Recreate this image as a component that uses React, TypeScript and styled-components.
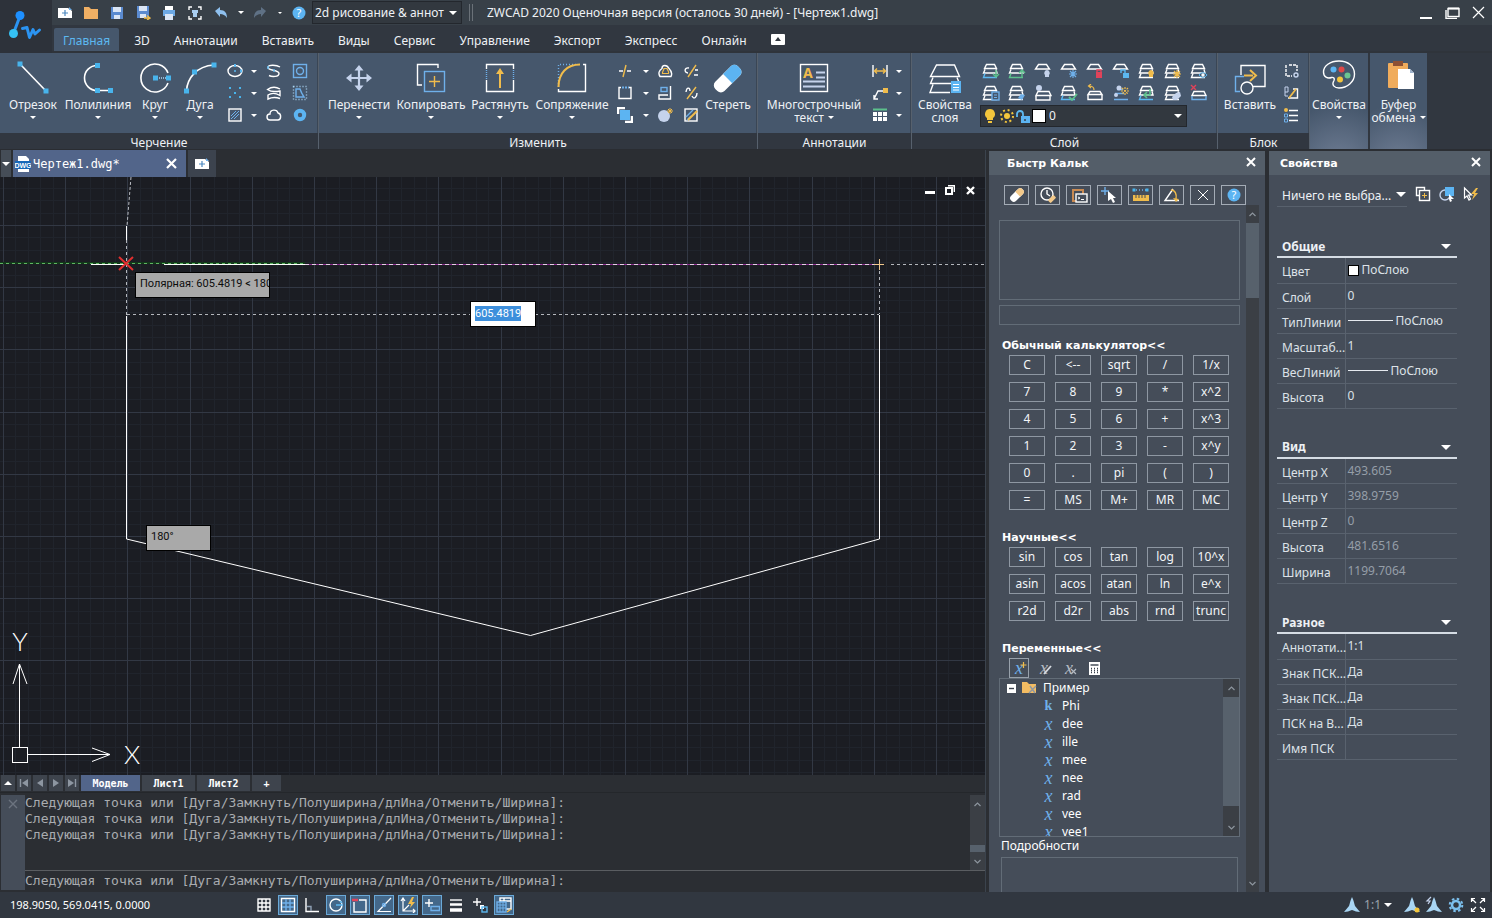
import React from "react";
import styled, { createGlobalStyle, css } from "styled-components";

const ui = `"Noto Sans", "Open Sans", sans-serif`;
const mono = `"DejaVu Sans Mono", "Liberation Mono", monospace`;
const wide = `"DejaVu Sans", "Noto Sans", sans-serif`;

const c = {
  title: "#384048",
  dark: "#313740",
  darker: "#2b2e33",
  ribbon: "#46576c",
  panel: "#454d59",
  head: "#545e69",
  line: "#59626e",
  blue: "#5cb8f0",
  sky: "#6fb0ea",
  pale: "#c5d3ec",
  gold: "#f0bc4c",
  green: "#5cc08c",
  red: "#e0435a",
  white: "#ffffff",
  text: "#eef1f5",
};

const GlobalStyle = createGlobalStyle`
  * { box-sizing: border-box; }
  body { margin: 0; background: ${c.dark}; }
  button, select, input, table { font: inherit; color: inherit; }
  button { margin: 0; padding: 0; border: 0; background: none; cursor: default; }
`;

const Shell = styled.div`
  height: 100vh;
  min-height: 640px;
  display: flex;
  flex-direction: column;
  overflow: hidden;
  background: ${c.darker};
  color: ${c.text};
  font: 12px/16px ${ui};
`;

const Caret = styled.span<{ $size?: number; $up?: boolean }>`
  display: block;
  flex: none;
  width: 0;
  height: 0;
  border: ${(p) => p.$size ?? 3}px solid transparent;
  border-bottom-width: ${(p) => (p.$up ? p.$size ?? 3 : 0)}px;
  border-top-width: ${(p) => (p.$up ? 0 : p.$size ?? 3)}px;
  ${(p) => (p.$up ? "border-bottom-color: #fff;" : "border-top-color: #fff;")}
`;

/* ---------- Title bar ---------- */

const Header = styled.header`
  flex: none;
  display: flex;
  background: ${c.dark};
`;
const Logo = styled.div`
  width: 52px;
  height: 53px;
  background: #2d323a;
`;
const HeaderRows = styled.div`
  flex: 1;
  min-width: 0;
`;
const TitleRow = styled.div`
  height: 25px;
  display: flex;
  align-items: center;
  background: ${c.title};
  white-space: nowrap;
`;
const QuickBar = styled.div`
  display: flex;
  align-items: center;
`;
const QuickButton = styled.button<{ $narrow?: boolean }>`
  width: ${(p) => (p.$narrow ? 13 : 26)}px;
  height: 24px;
  display: grid;
  place-items: center;
`;
const SelectFrame = styled.div<{ $w: number; $h: number }>`
  position: relative;
  flex: none;
  width: ${(p) => p.$w}px;
  height: ${(p) => p.$h}px;
  display: flex;
  align-items: center;
  justify-content: flex-end;
  padding-right: 5px;
`;
const Select = styled.select`
  position: absolute;
  inset: 0;
  appearance: none;
  padding: 0 14px 0 2px;
  border: 1px solid #23272d;
  background: #32383f;
  outline: 0;
`;
const Above = styled.div`
  position: relative;
  pointer-events: none;
`;
const Grip = styled.div`
  width: 4px;
  height: 17px;
  margin: 0 14px 0 7px;
  border: solid #6a7178;
  border-width: 0 1px;
`;
const Title = styled.div`
  flex: 1;
  overflow: hidden;
`;
const WindowButtons = styled.div`
  display: flex;
  padding-right: 1px;
`;
const WindowButton = styled.button`
  width: 26px;
  height: 25px;
  display: grid;
  place-items: center;
`;
const TabRow = styled.nav`
  height: 28px;
  padding: 3px 0 0 2px;
  display: flex;
  gap: 6px;
  border-bottom: 2px solid #2f343b;
`;
const RibbonTab = styled.button<{ $active?: boolean }>`
  padding: 1px 9px 0;
  height: 23px;
  line-height: 23px;
  border-radius: 2px 2px 0 0;
  ${(p) => p.$active && css`background: ${c.ribbon}; color: ${c.blue};`}
`;

/* ---------- Ribbon ---------- */

const Ribbon = styled.div`
  flex: none;
  display: flex;
  height: 97px;
  background: ${c.dark};
  border-bottom: 1px solid #2a2d32;
`;
const Group = styled.section<{ $w: number }>`
  width: ${(p) => p.$w}px;
  flex: none;
  display: flex;
  flex-direction: column;
  border-right: 1px solid #57616d;
`;
const GroupBody = styled.div`
  height: 80px;
  display: flex;
  background: ${c.ribbon};
  border-right: 1px solid #3a4655;
`;
const GroupTitle = styled.div`
  height: 16px;
  line-height: 19px;
  text-align: center;
  background: ${c.dark};
`;
const BigButton = styled.button<{ $w: number; $tall?: boolean }>`
  width: ${(p) => p.$w}px;
  flex: none;
  height: ${(p) => (p.$tall ? 96 : 80)}px;
  padding-top: 7px;
  display: flex;
  flex-direction: column;
  align-items: center;
  line-height: 13px;
  white-space: nowrap;
  svg { margin-bottom: 2px; }
  ${(p) =>
    p.$tall &&
    css`
      margin-right: 2px;
      background: radial-gradient(circle at 50% 115%, #6f7d94, ${c.ribbon} 52%);
    `}
`;
const BigLabel = styled.span`
  display: flex;
  align-items: center;
  gap: 4px;
  height: 13px;
`;
const BigCaret = styled.span`
  height: 13px;
  display: grid;
  place-items: center;
`;
const ToolGrid = styled.div<{ $cols: string }>`
  padding-top: 7px;
  display: grid;
  grid-template-columns: ${(p) => p.$cols};
  grid-auto-rows: 22px;
  align-content: start;
`;
const ToolButton = styled.button`
  display: grid;
  place-items: center;
`;
const LayerColumn = styled.div`
  padding-top: 7px;
`;
const LayerGrid = styled.div`
  display: grid;
  grid-template-columns: repeat(9, 26px);
  grid-auto-rows: 22px;
`;
const LayerSelectRow = styled.div`
  padding: 1px 0 0 2px;
`;
const LayerFace = styled(Above)`
  width: 200px;
  display: flex;
  align-items: center;
  gap: 2px;
`;
const LayerName = styled.span`
  flex: 1;
  padding-left: 1px;
`;

/* ---------- Workspace ---------- */

const Work = styled.main`
  flex: 1;
  min-height: 0;
  display: flex;
  padding-right: 2px;
`;
const DocColumn = styled.section`
  flex: 1;
  min-width: 0;
  display: flex;
  flex-direction: column;
  margin-right: 3px;
  border-right: 1px solid #3b434d;
`;
const DocTabs = styled.div`
  height: 27px;
  display: flex;
  padding-left: 1px;
  gap: 2px;
  background: ${c.darker};
`;
const DocList = styled.button`
  width: 10px;
  background: #454d57;
  display: grid;
  place-items: center;
`;
const DocTab = styled.button`
  width: 173px;
  display: flex;
  align-items: center;
  padding: 0 9px 0 2px;
  gap: 2px;
  background: #52658a;
  color: #fff;
  font: 12px/16px ${mono};
  span { flex: 1; text-align: left; }
`;
const NewTab = styled.button`
  width: 28px;
  background: #3c434e;
  display: grid;
  place-items: center;
`;
const Canvas = styled.div`
  position: relative;
  flex: 1;
  min-height: 0;
  overflow: hidden;
  background: #1b1d23;
`;
const Drawing = styled.svg`
  display: block;
  width: 100%;
  height: 100%;
`;
const MdiButtons = styled.div`
  position: absolute;
  top: 4px;
  right: 5px;
  display: flex;
`;
const MdiButton = styled.button`
  width: 20px;
  height: 18px;
  display: grid;
  place-items: center;
`;
const Tip = styled.div<{ $x: number; $y: number; $w: number }>`
  position: absolute;
  left: ${(p) => p.$x}px;
  top: ${(p) => p.$y}px;
  width: ${(p) => p.$w}px;
  height: 26px;
  padding-left: 4px;
  overflow: hidden;
  white-space: nowrap;
  border: 1px solid #000;
  background: #a9a9a9;
  color: #0c0c0c;
  font: 11px/22px Roboto, sans-serif;
`;
const DynamicField = styled.label`
  position: absolute;
  left: 470px;
  top: 124px;
  width: 66px;
  height: 26px;
  padding: 4px;
  border: 1px solid #000;
  background: #fff;
  input {
    display: block;
    width: 46px;
    height: 15px;
    padding: 0;
    border: 0;
    outline: 0;
    background: #3d8fdc;
    color: #fff;
    font: 11px/15px Roboto, sans-serif;
  }
`;
const SheetTabs = styled.div`
  height: 17px;
  display: flex;
  gap: 2px;
  padding: 0 0 1px 1px;
  background: ${c.darker};
`;
const SheetNav = styled.button`
  width: 14px;
  background: #3e444d;
  display: grid;
  place-items: center;
`;
const SheetTab = styled.button<{ $w: number; $active?: boolean }>`
  width: ${(p) => p.$w}px;
  background: ${(p) => (p.$active ? "#52658a" : "#3e444d")};
  color: #fff;
  font: bold 10px/15px ${mono};
`;
const Command = styled.div`
  height: 100px;
  display: flex;
  background: ${c.darker};
  padding: 2px 0 2px 1px;
  border-top: 1px solid #24272b;
  color: #a9acb0;
  font: 13px/16px ${mono};
`;
const CommandStrip = styled.button`
  width: 24px;
  background: #454d59;
  display: flex;
  justify-content: center;
  padding-top: 4px;
`;
const CommandText = styled.div`
  flex: 1;
  min-width: 0;
  display: flex;
  flex-direction: column;
`;
const Log = styled.div`
  flex: 1;
  display: flex;
  min-height: 0;
  border-bottom: 1px solid #5a5d61;
`;
const LogLines = styled.div`
  flex: 1;
  white-space: nowrap;
  overflow: hidden;
`;
const CommandInput = styled.input`
  height: 19px;
  padding: 0;
  border: 0;
  outline: 0;
  background: transparent;
`;

/* ---------- Scroll bars ---------- */

const ScrollTrack = styled.div<{ $w: number }>`
  width: ${(p) => p.$w}px;
  flex: none;
  display: flex;
  flex-direction: column;
  align-items: center;
  background: #3b3f45;
`;
const ScrollThumb = styled.div<{ $h?: number; $push?: boolean }>`
  width: 100%;
  height: ${(p) => p.$h}px;
  background: #57616c;
  ${(p) => p.$push && "margin-top: auto;"}
`;
const ScrollArrow = styled.button<{ $end?: boolean }>`
  height: 18px;
  width: 100%;
  flex: none;
  display: grid;
  place-items: center;
  ${(p) => p.$end && "margin-top: auto;"}
`;

/* ---------- Docked panels ---------- */

const Dock = styled.aside<{ $w: number }>`
  width: ${(p) => p.$w}px;
  flex: none;
  min-height: 0;
  display: flex;
  flex-direction: column;
  margin-top: 1px;
  background: ${c.panel};
  overflow: hidden;
  & + & { margin-left: 4px; }
`;
const DockHead = styled.div<{ $pad: number }>`
  height: 24px;
  flex: none;
  display: flex;
  align-items: center;
  justify-content: space-between;
  padding: 1px 9px 0 ${(p) => p.$pad}px;
  background: ${c.head};
  color: #fff;
  font: bold 11px/22px ${wide};
`;
const CalcBar = styled.div`
  flex: none;
  display: flex;
  gap: 6px;
  padding: 10px 0 0 15px;
`;
const CalcTool = styled.button`
  width: 25px;
  height: 20px;
  border: 1px solid #a3abb5;
  display: grid;
  place-items: center;
`;
const CalcMain = styled.div`
  flex: 1;
  min-height: 0;
  display: flex;
  justify-content: space-between;
  padding-right: 6px;
`;
const CalcScroll = styled.div`
  width: 251px;
  overflow: hidden;
  padding: 15px 0 0 10px;
`;
const History = styled.div`
  height: 80px;
  border: 1px solid #626c77;
`;
const CalcInput = styled.input`
  display: block;
  width: 100%;
  height: 20px;
  margin-top: 5px;
  border: 1px solid #626c77;
  background: transparent;
  outline: 0;
`;
const CalcHeading = styled.h2<{ $top: number }>`
  margin: ${(p) => p.$top}px 0 0 3px;
  height: 20px;
  color: #fff;
  font: bold 11px/21px ${wide};
`;
const Keys = styled.div`
  display: grid;
  grid-template-columns: repeat(5, 36px);
  grid-auto-rows: 20px;
  gap: 7px 10px;
  padding-left: 10px;
`;
const Key = styled.button`
  border: 1px solid #8e97a2;
  line-height: 18px;
  color: #f3f5f8;
  white-space: nowrap;
`;
const VarBar = styled.div`
  display: flex;
  gap: 5px;
  padding-left: 10px;
  height: 20px;
`;
const VarButton = styled.button<{ $on?: boolean }>`
  position: relative;
  width: 20px;
  height: 20px;
  border: 1px solid ${(p) => (p.$on ? "#98a1ab" : "transparent")};
  display: grid;
  place-items: center;
  svg + svg, i + svg {
    position: absolute;
    inset: 0;
  }
`;
const Tree = styled.div`
  height: 159px;
  display: flex;
  border: 1px solid #626c77;
`;
const TreeList = styled.ul`
  flex: 1;
  margin: 0;
  padding: 0;
  overflow: hidden;
  list-style: none;
  color: #fff;
`;
const TreeItem = styled.li<{ $root?: boolean }>`
  height: 18px;
  display: flex;
  align-items: center;
  gap: ${(p) => (p.$root ? 5 : 7)}px;
  padding-left: ${(p) => (p.$root ? 7 : 42)}px;
`;
const Glyph = styled.i<{ $plain?: boolean; $dim?: boolean }>`
  width: 13px;
  text-align: center;
  color: ${(p) => (p.$dim ? "#b4bac2" : c.sky)};
  font: ${(p) => (p.$plain ? "bold 14px" : "italic 18px")} / 16px "Liberation Serif", serif;
`;
const Details = styled.div`
  padding-left: 2px;
  line-height: 18px;
  color: #fff;
`;
const DetailBox = styled.div`
  height: 80px;
  margin: 2px 2px 0;
  border: 1px solid #626c77;
`;

const PropBar = styled.div`
  flex: none;
  height: 33px;
  padding: 8px 8px 0 8px;
  display: flex;
  gap: 4px;
`;
const PropFrame = styled(SelectFrame)`
  margin-right: 2px;
  padding-right: 1px;
  border-bottom: 1px solid #58616d;
`;
const PropSelect = styled(Select)`
  border: 0;
  padding: 2px 0 0 5px;
  background: transparent;
`;
const PropButton = styled.button`
  width: 20px;
  height: 21px;
  display: grid;
  place-items: center;
`;
const PropSection = styled.section`
  width: 180px;
  margin-left: 8px;
`;
const PropHeading = styled.button`
  width: 100%;
  height: 50px;
  padding: 29px 6px 0 5px;
  display: flex;
  justify-content: space-between;
  align-items: center;
  border-bottom: 2px solid #d5dce4;
  font-weight: bold;
  line-height: 18px;
`;
const PropTable = styled.table`
  width: 100%;
  table-layout: fixed;
  border-collapse: collapse;
  tr { height: 25px; border-bottom: 1px solid ${c.line}; }
  th, td { padding: 0; font-weight: normal; text-align: left; white-space: nowrap; }
  th { width: 68px; padding: 4px 0 0 5px; border-right: 1px solid ${c.line}; color: #dde2e8; }
`;
const PropValue = styled.span<{ $dim?: boolean }>`
  display: flex;
  align-items: center;
  gap: 3px;
  padding-left: 2px;
  color: ${(p) => (p.$dim ? "#959ea8" : "#dde2e8")};
`;
const Swatch = styled.span<{ $s: number }>`
  flex: none;
  width: ${(p) => p.$s}px;
  height: ${(p) => p.$s}px;
  border: 1px solid #000;
  background: #fff;
`;
const Stroke = styled.span<{ $w: number }>`
  width: ${(p) => p.$w}px;
  height: 1px;
  background: #e6eaef;
`;

/* ---------- Status bar ---------- */

const Status = styled.footer`
  flex: none;
  height: 26px;
  display: flex;
  align-items: center;
  background: ${c.dark};
  color: #fff;
`;
const Coords = styled.div`
  width: 244px;
  padding-left: 10px;
  font-size: 11px;
  line-height: 28px;
`;
const StatusTools = styled.div`
  flex: 1;
  display: flex;
  gap: 4px;
  padding-left: 10px;
`;
const StatusButton = styled.button<{ $on?: boolean }>`
  width: 20px;
  height: 20px;
  display: grid;
  place-items: center;
  border: 1px solid ${(p) => (p.$on ? "#6aa9d8" : "transparent")};
  background: ${(p) => (p.$on ? "#44688a" : "transparent")};
`;
const StatusRight = styled.div`
  display: flex;
  align-items: center;
  gap: 2px;
  padding-right: 4px;
  color: #9ba3ac;
`;
const ScaleButton = styled.button`
  display: flex;
  align-items: center;
  gap: 3px;
  margin-right: 8px;
`;

/* ---------- Icons ---------- */

type IconProps = { s?: number; w?: number; h?: number; children: React.ReactNode };
const Icon = ({ s = 16, w, h, children }: IconProps) => (
  <svg width={w ?? s} height={h ?? s} viewBox={`0 0 ${w ?? s} ${h ?? s}`} fill="none" stroke="#fff" strokeWidth="1.4" aria-hidden="true">
    {children}
  </svg>
);
const Dot = ({ x, y, r = 2.5 }: { x: number; y: number; r?: number }) => (
  <rect x={x - r} y={y - r} width={r * 2} height={r * 2} fill="#48b4ec" stroke="none" />
);
const HelpIcon = ({ s = 14 }: { s?: number }) => (
  <Icon s={s}>
    <circle cx={s / 2} cy={s / 2} r={s / 2 - 0.5} fill="#5cb4f2" stroke="none" />
    <text x={s / 2} y={s / 2 + 4} fontSize="11" textAnchor="middle" fill="#fff" stroke="none" fontFamily="Noto Sans, sans-serif">?</text>
  </Icon>
);
const CloseIcon = ({ color = "#fff", s = 10, w = 2 }: { color?: string; s?: number; w?: number }) => (
  <Icon s={s}><path d={`M1 1L${s - 1} ${s - 1}M${s - 1} 1L1 ${s - 1}`} stroke={color} strokeWidth={w} /></Icon>
);
const ChevronIcon = ({ down }: { down?: boolean }) => (
  <Icon s={9}><path d={down ? "M1.5 3l3 3 3-3" : "M1.5 6l3-3 3 3"} stroke="#8d959e" strokeWidth="1.2" /></Icon>
);
const NewDocIcon = () => (
  <Icon w={16} h={12}>
    <path d="M1 1h10l4 3v7H1z" fill="#fff" stroke="none" />
    <path d="M12 0l3 3h-3z" fill="#6fb0ea" stroke="none" />
    <path d="M8 3v6M5 6h6" stroke="#4a87bf" strokeWidth="1.2" />
  </Icon>
);

const big = {
  line: <Icon s={36}><path d="M5 4L31 31" strokeWidth="1.6" /><Dot x={5} y={4} /><Dot x={31} y={31} /></Icon>,
  poly: <Icon s={36}><path d="M17 5.500a12.500 12.500 0 0 0 0 25H30" strokeWidth="1.600" /><Dot x={17.5} y={5.5} /><Dot x={17.5} y={30.5} /><Dot x={30.5} y={30.5} /></Icon>,
  circle: <Icon s={36}><path d="M31 13a14 14 0 1 0 0 10" strokeWidth="1.6" /><path d="M18 18h13" strokeDasharray="1 1" stroke="#a9d4f2" /><Dot x={18.5} y={18} /><Dot x={31.5} y={18} /></Icon>,
  arc: <Icon s={36}><path d="M4.500 31C5 19 14 6 32 5" strokeWidth="1.6" /><Dot x={32} y={5} /><Dot x={12.5} y={12} /><Dot x={4.5} y={31} /></Icon>,
  move: <Icon s={36}><path d="M18 8v20M8 18h20" stroke={c.pale} strokeWidth="2.200" /><path d="M18 5l4.500 5.500h-9zM18 31l4.500-5.500h-9zM5 18l5.500-4.500v9zM31 18l-5.500-4.500v9z" fill={c.pale} stroke="none" /></Icon>,
  copy: <Icon s={36}><path d="M25 8V4.500H4.500V25H9" /><rect x="11.5" y="11.500" width="20" height="20" stroke={c.sky} /><path d="M21.500 16v11M16 21.500h11" stroke={c.gold} /></Icon>,
  stretch: <Icon s={36}><path d="M4.500 9V4.500h27V9M4.500 20v11.500h27V20" /><path d="M4.500 10v10M31.500 10v10" stroke={c.sky} strokeDasharray="1 1" /><path d="M18 28V12" stroke={c.gold} strokeWidth="2" /><path d="M18 8l4 6h-8z" fill={c.gold} stroke="none" /></Icon>,
  fillet: <Icon s={36}><path d="M4.500 29v2.500h27V4.500H29" /><path d="M4.500 27V4.500H24" stroke={c.sky} strokeDasharray="1 2" /><path d="M4.500 27C4.500 13 13 4.500 26 4.500" stroke={c.gold} strokeWidth="2" /></Icon>,
  erase: <Icon s={36}><g transform="rotate(-45 18 19)" stroke="none"><rect x="2" y="12" width="32" height="13" rx="5" fill="#fff" /><path d="M18 12h11a5 5 0 0 1 5 5v3a5 5 0 0 1-5 5H18z" fill="#5cb4f2" /></g></Icon>,
  mtext: <Icon s={36}><rect x="4.500" y="4.500" width="27" height="27" /><text x="7" y="18" fontSize="14" fontWeight="bold" fill={c.gold} stroke="none" fontFamily="Noto Sans, sans-serif">A</text><path d="M20 12.500h9M20 17.500h9M7 21.500h22M7 26.500h22" stroke={c.pale} strokeWidth="1.8" /></Icon>,
  layers: <Icon s={36}><path d="M9.500 5h18l5 11.500h-29z" /><path d="M6 17.500l-2.500 6h29L30 17.500M6 24.500L3 32.500h20" /><rect x="24" y="21" width="10" height="12" fill="#5cb4f2" stroke="none" /><path d="M26 24.500h6M26 27.500h6M26 30h6" strokeWidth="1" /></Icon>,
  insert: <Icon s={36}><path d="M9 15V5.500h24v21H21" /><path d="M12 16.500H3.500v15H8" stroke={c.sky} /><path d="M12 15.500h9" stroke={c.gold} strokeWidth="2" /><path d="M18 10l6 5.500-6 5.500" stroke={c.gold} strokeWidth="2" /><circle cx="15" cy="28" r="6" /></Icon>,
  palette: <Icon s={36}><path d="M18 1C9 1 2.500 6 2.500 12c0 5 4 7 8 5.500 2-.5 3.500 1 2.500 3-3 5 1 7.500 5 7.500 8 0 15.500-6 15.500-14S27 1 18 1z" /><g stroke="none"><circle cx="12.500" cy="9.500" r="3" fill="#5cb4f2" /><circle cx="20.500" cy="9.500" r="3" fill="#e04848" /><circle cx="26.500" cy="15.500" r="3" fill="#6cc490" /><circle cx="19" cy="19.500" r="3" fill="#f4c63c" /></g></Icon>,
  paste: <Icon s={36}><g stroke="none"><rect x="7" y="3" width="20" height="25" rx="1" fill="#f0ac5c" /><path d="M12 1h10v5H12z" fill="#8c5034" /><path d="M17 9h12l4 4v16H17z" fill="#fff" /><path d="M29 9l4 4h-4z" fill="#9db2cc" /></g></Icon>,
};

const Sm = ({ children }: { children: React.ReactNode }) => <Icon s={16}>{children}</Icon>;
const drawTools = [
  <Sm><ellipse cx="8" cy="8" rx="7" ry="5.500" /><circle cx="8" cy="8" r="1" fill={c.blue} stroke="none" /><path d="M8 1v3M14 6.500v3" stroke={c.blue} strokeWidth="2" /></Sm>,
  <Caret />,
  <Sm><path d="M14 4C11 2 2 1 2 4.500 2 8 13 6.500 13 10.500 13 14 6 14 3 12.500" /><path d="M2 3v3M8 6v3" stroke={c.blue} /></Sm>,
  <Sm><rect x="1.500" y="1.500" width="13" height="13" stroke={c.sky} /><circle cx="8" cy="8" r="3.500" stroke={c.sky} /></Sm>,
  <Sm>{[[3, 3], [13, 3], [8, 8], [3, 12], [13, 12]].map(([x, y]) => <Dot key={`${x}${y}`} x={x} y={y} r={1} />)}</Sm>,
  <Caret />,
  <Sm><path d="M14 4C9 1 5 2 1.500 4.500 5 7 9 7 14 6v4.500C9 7.500 5 8 2 10v4c4-2 8-2 12-.5" /></Sm>,
  <Sm><rect x="1.500" y="1.500" width="13" height="13" stroke="#a9d4f2" strokeDasharray="1 2" /><path d="M4 4h4c1 3 2 5 4 8H4z" stroke={c.sky} /></Sm>,
  <Sm><rect x="2" y="2" width="12" height="12" /><path d="M4 9l5-5M4 12l8-8M7 12l5-5" stroke={c.sky} strokeWidth="1" /></Sm>,
  <Caret />,
  <Sm><path d="M4 13a3 3 0 0 1 0-6c0-5 7-5 8-1 4 1 3 7 0 7z" /></Sm>,
  <Sm><circle cx="8" cy="8" r="4.200" stroke="#5cb4f2" strokeWidth="4" /></Sm>,
];
const editTools = [
  <Sm><path d="M2 8h4M10 8h4" /><path d="M9 2L6 14" stroke={c.gold} /></Sm>,
  <Caret />,
  <Sm><path d="M3 13.500h11c2-4-1-7-2-8-2-4-7-4-7 0-3 2-4 5-2 8z" /><path d="M5.500 10.500h6c1-2-1-3-1.500-5h-3c0 2-2 3-1.500 5z" stroke={c.gold} strokeWidth="1.200" /></Sm>,
  <Sm><path d="M6 5c-5-1-5 5-1 5M11 12h4M12 7h3" /><path d="M13 2L5 14" stroke={c.gold} /></Sm>,
  <Sm><path d="M4 2.500H2v11h12v-11h-2" /><path d="M5 2.500h7" stroke={c.sky} strokeDasharray="2 1" strokeWidth="2" /></Sm>,
  <Caret />,
  <Sm><path d="M13.500 1v13H2v-4h9" /><rect x="4" y="2.500" width="6" height="4" stroke={c.sky} /></Sm>,
  <Sm><path d="M3 7c1-6 4-4 4-1M9 11c2 4 5 1 5-3" /><path d="M13 2L4 14" stroke={c.gold} /></Sm>,
  <Sm><path d="M1 7V1h7M15 9v6H8" strokeWidth="2.500" /><rect x="3" y="3" width="10" height="10" fill="#5cb4f2" stroke="none" /></Sm>,
  <Caret />,
  <Sm><circle cx="7" cy="9" r="6" fill={c.pale} stroke="none" /><path d="M13 1v6M10 4h6M11 2l4 4M15 2l-4 4" stroke={c.gold} strokeWidth="1" /></Sm>,
  <Sm><rect x="2" y="2" width="12" height="12" /><path d="M3 10l7-7M4 13l4-4" stroke={c.sky} /><path d="M14 4L5 13" stroke={c.gold} strokeWidth="2" /></Sm>,
];
const noteTools = [
  <Sm><path d="M1 2v12M15 2v12" /><path d="M3 8h10M5 5.500L2.500 8 5 10.500M11 5.500L13.500 8 11 10.500" stroke={c.gold} /></Sm>,
  <Caret />,
  <Sm><path d="M2 14L6 6h5M2 10v4h4" /><rect x="11" y="3" width="5" height="5" fill={c.gold} stroke="none" /></Sm>,
  <Caret />,
  <Sm><path d="M1 2.500h14" stroke={c.green} strokeWidth="2" /><g fill="#fff" stroke="none">{[5, 10].map((y) => [1, 6, 11].map((x) => <rect key={`${x}-${y}`} x={x} y={y} width="4" height="4" />))}</g></Sm>,
  <Caret />,
];
const blockTools = [
  <Sm><path d="M3 2v11h6M6 2h8v6" strokeDasharray="3 1" /><circle cx="13" cy="12" r="2" stroke={c.pale} /></Sm>,
  <Sm><path d="M5 13h9.500V4H10" /><path d="M2 2h3v5H2zM2 7v4h3" stroke={c.pale} strokeWidth="1" /><path d="M13 4l-7 9" stroke={c.gold} strokeWidth="1.800" /></Sm>,
  <Sm><path d="M6 3.500h9M6 8.500h9M6 13.500h9" /><circle cx="3" cy="3" r="2" fill={c.gold} stroke="none" /><path d="M1.500 7h3v3h-3zM1.500 12h3v3h-3z" stroke={c.sky} strokeWidth="1" /></Sm>,
];

const star = (color: string, x = 13, y = 12) => (
  <path d={`M${x} ${y - 4}v8M${x - 4} ${y}h8M${x - 3} ${y - 3}l6 6M${x + 3} ${y - 3}l-6 6`} stroke={color} strokeWidth="1.200" />
);
const stack = (color = "#fff") => (
  <>
    <path d="M4.500 2.500h8l2 4H2.500zM3 7.500L1.500 11H15L14 7.500" />
    <path d="M3 11.500L1.500 15.500H15" stroke={color} />
  </>
);
const sheet = <path d="M4.500 2.500h8l3 4.500H1.500z" />;
const bulb = (color: string) => <path d="M13 8a3 3 0 0 1 2 5v2h-4v-2a3 3 0 0 1 2-5z" fill={color} stroke="none" />;
const layerIcons = [
  <>{stack(c.blue)}<path d="M14 8v7M11 12l3 3 3-3" stroke={c.green} /></>,
  <>{stack(c.green)}<path d="M14 16V8M11 11l3-3 3 3" stroke={c.green} /></>,
  <>{sheet}{bulb(c.pale)}</>,
  <>{sheet}{star(c.sky)}</>,
  <>{sheet}<rect x="10" y="10" width="6" height="6" fill={c.red} stroke="none" /><path d="M11 10V8h4v2" stroke={c.red} /></>,
  <>{sheet}<rect x="11" y="11" width="6" height="5" fill={c.blue} stroke="none" /><path d="M9 11V8h4v3" stroke={c.blue} /></>,
  <>{stack()}{bulb(c.gold)}</>,
  <>{stack()}{star(c.gold)}</>,
  <>{stack()}<path d="M9 13c2-3 6-3 8 0-2 3-6 3-8 0z" stroke={c.blue} fill={c.ribbon} strokeWidth="1" /><circle cx="13" cy="13" r="1" fill={c.blue} /></>,
  <>{stack()}<rect x="10" y="8" width="7" height="8" fill={c.ribbon} stroke={c.sky} /><path d="M12 11h3M12 13.500h3" stroke={c.sky} strokeWidth="1" /></>,
  <>{stack()}<path d="M10 14l3-4 4 1-3 5z" fill={c.sky} stroke="none" /></>,
  <><path d="M4 7.500h11l2 4H2zM2 12v4h14v-4" /><circle cx="5" cy="4" r="3" fill={c.pale} stroke="none" /></>,
  <>{stack(c.blue)}<path d="M9 13l3 3 5-6" stroke={c.green} strokeWidth="1.800" /></>,
  <><path d="M4 7.500h10l2 3H2zM2 11v4.500h14V11" /><path d="M8 6c0-3-2-4-5-4M5 0L2.500 2 5 4" stroke={c.gold} strokeWidth="1.200" /></>,
  <><path d="M5 5.500h6M3 9.500h9M2 15.500h14" stroke={c.sky} /><circle cx="7" cy="4" r="2.500" fill={c.pale} stroke="none" /><circle cx="4" cy="11" r="2" fill={c.pale} stroke="none" /><g strokeDasharray="2 1">{star(c.gold, 13, 7)}</g></>,
  <>{stack(c.blue)}<path d="M12 5v6H6M9 8l-3 3 3 3" stroke={c.green} strokeWidth="1.600" /></>,
  <>{stack()}<path d="M8 13l4-4 4-1 1 4-4 4h-4z" fill={c.pale} stroke="none" /></>,
  <><path d="M4 7.500h10l2 4H2z" /><path d="M2 12v3.500h14V12" stroke={c.sky} /><path d="M1 1l5 5M6 1L1 6" stroke={c.red} /></>,
];

const quickIcons: { name: string; narrow?: boolean; icon: React.ReactNode }[] = [
  { name: "Создать", icon: <NewDocIcon /> },
  { name: "Открыть", icon: <Icon s={16}><path d="M1 2h5l2 2h7v10H1z" fill="#f0b064" stroke="none" /></Icon> },
  { name: "Сохранить", icon: <Icon s={14}><path d="M1 1h12v12H1z" fill="#5b8bd0" stroke="none" /><path d="M3 1h8v5H3zM4 9h6v4H4z" fill="#dbe6f6" stroke="none" /></Icon> },
  { name: "Сохранить как", icon: <Icon s={15}><path d="M1 1h12v12H1z" fill="#5b8bd0" stroke="none" /><path d="M3 1h8v5H3zM4 9h6v4H4z" fill="#dbe6f6" stroke="none" /><path d="M8 13h5M11 10.500l3 2.500-3 2" stroke={c.gold} /></Icon> },
  { name: "Печать", icon: <Icon s={14}><path d="M3 0h8v4H3z" fill="#fff" stroke="none" /><path d="M1 4h12v6H1z" fill="#6ca8e4" stroke="none" /><path d="M3 8h8v6H3z" fill="#dbe6f6" stroke="none" /></Icon> },
  { name: "Просмотр", icon: <Icon s={14}><path d="M1 4V1h3M10 1h3v3M13 10v3h-3M4 13H1v-3" /><path d="M4 4h6v3H4zM5 7h4v4H5z" fill="#a8cdf0" stroke="none" /></Icon> },
  { name: "Отменить", icon: <Icon s={14}><path d="M1 5l5-4v3c5 0 7 3 7 8-2-3-4-4-7-4v3z" fill="#8fc0ee" stroke="none" /></Icon> },
  { name: "Список отмены", narrow: true, icon: <Caret $size={3} /> },
  { name: "Вернуть", icon: <Icon s={14}><path d="M13 5L8 1v3C3 4 1 7 1 12c2-3 4-4 7-4v3z" fill="#5f7185" stroke="none" /></Icon> },
  { name: "Список возврата", narrow: true, icon: <Caret $size={2} /> },
  { name: "Справка", icon: <HelpIcon /> },
];

const calcTools = [
  { name: "Очистить", icon: <Icon w={18} h={16}><g transform="rotate(-45 9 8)" stroke="none"><rect x="1" y="4.500" width="16" height="7" rx="3" fill="#fff" /><path d="M10 4.500h4a3 3 0 0 1 3 3v1a3 3 0 0 1-3 3h-4z" fill="#f3c98a" /></g></Icon> },
  { name: "Очистить журнал", icon: <Icon w={18} h={16}><circle cx="8" cy="7" r="6" /><path d="M8 3v4l3 2" /><g transform="rotate(-45 13 12)"><rect x="9" y="10" width="8" height="4" rx="1" fill="#f3c98a" stroke="none" /></g></Icon> },
  { name: "Вставить в командную строку", icon: <Icon w={18} h={16}><path d="M2 2h12v13H2z" fill="#c98a52" stroke="none" /><path d="M4 4h8v9H4z" fill="#454d59" stroke="none" /><rect x="6" y="7" width="11" height="8" fill="#454d59" /><path d="M8 10l2 1-2 1M11 12.500h3" strokeWidth="1" /></Icon> },
  { name: "Координаты", icon: <Icon w={18} h={16}><path d="M4 0v8M0 4h8" stroke={c.sky} /><path d="M7 4l8 7h-3l2 4-2 1-2-4-3 2z" fill="#fff" stroke="none" /></Icon> },
  { name: "Расстояние", icon: <Icon w={18} h={16}><Dot x={2} y={3} r={1.5} /><Dot x={15} y={3} r={1.5} /><path d="M4 3h10" stroke={c.sky} strokeDasharray="1 2" /><path d="M1 8h16v6H1z" fill={c.gold} stroke="none" /><path d="M4 8v3M7 8v3M10 8v3M13 8v3" stroke="#454d59" strokeWidth="1" /></Icon> },
  { name: "Угол", icon: <Icon w={18} h={16}><path d="M10 2L2 13.500h14" /><path d="M8 3c4 0 6 4 5 9" stroke={c.gold} /><path d="M10 11l3 4 3-3z" fill={c.gold} stroke="none" /></Icon> },
  { name: "Пересечение", icon: <Icon w={18} h={16}><path d="M4 3l10 10M14 3L4 13" strokeWidth="1" /></Icon> },
  { name: "Справка", icon: <HelpIcon s={14} /> },
];

const statusTools: { name: string; on?: boolean; icon: React.ReactNode }[] = [
  { name: "Сетка", icon: <Icon s={16}><path d="M1.500 2h13M1.500 6h13M1.500 10h13M1.500 14h13M2 1.500v13M6 1.500v13M10 1.500v13M14 1.500v13" /></Icon> },
  { name: "Шаг", on: true, icon: <Icon s={16}><path d="M1.500 1.500h13v13h-13z" /><path d="M2 6h12M2 10h12M6 2v12M10 2v12" stroke={c.sky} /></Icon> },
  { name: "Орто", icon: <Icon s={16}><path d="M2 1v13.500h13" /><path d="M3 9.500h4V14" stroke="#8fa0b4" /></Icon> },
  { name: "Полярная", on: true, icon: <Icon s={16}><circle cx="8" cy="8" r="6" /><path d="M8 8h7M12 4l2 2" stroke={c.blue} /></Icon> },
  { name: "Привязка", on: true, icon: <Icon s={16}><path d="M2 5v10h12V3H7" /><path d="M0 3h6" stroke={c.red} strokeWidth="2.500" /></Icon> },
  { name: "Отслеживание", on: true, icon: <Icon s={16}><path d="M15 1L2 14.500h13" strokeWidth="1.200" /><circle cx="8" cy="8" r="1.500" stroke={c.sky} /></Icon> },
  { name: "Динамическая ПСК", on: true, icon: <Icon s={16}><path d="M3 2v12h12M3 14l6-6M1 4l2-3 2 3M13 12l2 2-2 2" strokeWidth="1.200" /><path d="M12 0L8 7h3l-1 4 5-6h-3l2-5z" fill={c.gold} stroke="none" /></Icon> },
  { name: "Динамический ввод", on: true, icon: <Icon s={16}><path d="M5 2v8M1 6h8" /><path d="M7 9.500h8.500v4H7z" stroke={c.sky} /></Icon> },
  { name: "Вес линий", icon: <Icon s={16}><path d="M2 3h12" /><path d="M2 7.500h12" strokeWidth="2.500" /><path d="M2 13h12" strokeWidth="3.500" /></Icon> },
  { name: "Циклический выбор", icon: <Icon s={16}><path d="M5 1v8M1 5h8" /><path d="M8 8h4v4H8z" fill="#fff" stroke="none" /><rect x="10" y="10" width="5" height="5" stroke={c.blue} /></Icon> },
  { name: "Быстрые свойства", on: true, icon: <Icon s={18}><rect x="5" y="2" width="11" height="11" /><path d="M5 5h11M9 2v11" /><rect x="2" y="6" width="9" height="10" fill="#44688a" stroke={c.sky} /><path d="M2 9h9M2 12h9M5 6v10M8 6v10" stroke={c.sky} strokeWidth="1" /><path d="M12 16l4-3" stroke={c.gold} /></Icon> },
];

const ScaleIcon = ({ extra }: { extra?: React.ReactNode }) => (
  <Icon s={18}>
    <path d="M9 1c2 4 2 6 3 9l5 6c-3 0-5-1-8-2-3 1-5 2-8 2l5-6c1-3 1-5 3-9z" fill="#a9d6f4" stroke="none" />
    {extra}
  </Icon>
);

/* ---------- Data ---------- */

const ribbonTabs = ["Главная", "3D", "Аннотации", "Вставить", "Виды", "Сервис", "Управление", "Экспорт", "Экспресс", "Онлайн"];
const basicKeys = "C <-- sqrt / 1/x 7 8 9 * x^2 4 5 6 + x^3 1 2 3 - x^y 0 . pi ( ) = MS M+ MR MC".split(" ");
const scienceKeys = "sin cos tan log 10^x asin acos atan ln e^x r2d d2r abs rnd trunc".split(" ");
const variables = ["Phi", "dee", "ille", "mee", "nee", "rad", "vee", "vee1"];
const prompt = "Следующая точка или [Дуга/Замкнуть/Полуширина/длИна/Отменить/Ширина]:";

type Row = { label: string; value: string; kind?: "swatch" | "type" | "weight" | "dim" };
const sections: { title: string; rows: Row[] }[] = [
  {
    title: "Общие",
    rows: [
      { label: "Цвет", value: "ПоСлою", kind: "swatch" },
      { label: "Слой", value: "0" },
      { label: "ТипЛинии", value: "ПоСлою", kind: "type" },
      { label: "Масштаб...", value: "1" },
      { label: "ВесЛиний", value: "ПоСлою", kind: "weight" },
      { label: "Высота", value: "0" },
    ],
  },
  {
    title: "Вид",
    rows: [
      { label: "Центр X", value: "493.605", kind: "dim" },
      { label: "Центр Y", value: "398.9759", kind: "dim" },
      { label: "Центр Z", value: "0", kind: "dim" },
      { label: "Высота", value: "481.6516", kind: "dim" },
      { label: "Ширина", value: "1199.7064", kind: "dim" },
    ],
  },
  {
    title: "Разное",
    rows: [
      { label: "Аннотати...", value: "1:1" },
      { label: "Знак ПСК...", value: "Да" },
      { label: "Знак ПСК...", value: "Да" },
      { label: "ПСК на В...", value: "Да" },
      { label: "Имя ПСК", value: "" },
    ],
  },
];

/* ---------- Parts ---------- */

type BigProps = { icon: React.ReactNode; w: number; lines: string[]; caret?: "below" | "inline"; tall?: boolean };
const Big = ({ icon, w, lines, caret, tall }: BigProps) => (
  <BigButton $w={w} $tall={tall}>
    {icon}
    {lines.map((line, i) => (
      <BigLabel key={line}>
        {line}
        {caret === "inline" && i === lines.length - 1 && <Caret />}
      </BigLabel>
    ))}
    {caret === "below" && <BigCaret><Caret /></BigCaret>}
  </BigButton>
);

const Tools = ({ cols, items }: { cols: string; items: React.ReactNode[] }) => (
  <ToolGrid $cols={cols}>
    {items.map((it, i) => <ToolButton key={i}>{it}</ToolButton>)}
  </ToolGrid>
);

const GRID = 62.2;
const gridPath = (step: number, skip: number) => {
  let d = "";
  for (let i = -4; i * step < 2600; i++) {
    if (skip && i % skip === 0) continue;
    d += `M${Math.round(3 + i * step) + 0.5} 0V1600M0 ${Math.round(48 + i * step) + 0.5}H2600`;
  }
  return d;
};

const CanvasDrawing = () => (
  <Drawing fill="none" stroke="#fff" aria-label="Чертеж">
    <path d={gridPath(GRID / 5, 5)} stroke="#20242c" />
    <path d={gridPath(GRID, 0)} stroke="#323844" />
    <path d="M131 0L127 49" stroke="#b9bcc2" strokeDasharray="3 2" />
    <path d="M126.500 49v14" />
    <path d="M126.500 63v75M879.500 88v49M127 137.500h752M891 87.500h2000" stroke="#b4b7bc" strokeDasharray="3 3" />
    <path d="M0 85.500h305M0 86.500h305" stroke="#12381a" />
    <path d="M0 86.500h305" stroke="#5fb562" strokeDasharray="3 3" />
    <path d="M91 87.500h35M164 87.500h141" />
    <path d="M305 87.500h575" stroke="#8d2c90" />
    <path d="M305 87.500h575" stroke="#e6cfe6" strokeDasharray="4 3" />
    <path d="M126.500 139v223L530.500 458.500 879.500 362V138" />
    <path d="M119 80l14 13M133 80l-14 13" stroke="#e03030" strokeWidth="2" />
    <path d="M874 87.500h10M879.500 82v11" stroke="#f0c88c" />
    <rect x="12.500" y="570.500" width="15" height="15" />
    <path d="M19.500 570V487M13 507l6.500-20 7.500 20M28 577.500h82M92 571l18 6.500-18 7" />
    <g stroke="none" fill="#fff" fontFamily="Lato, sans-serif" fontWeight="300" fontSize="26" textAnchor="middle">
      <text x="20" y="474">Y</text>
      <text x="132" y="587">X</text>
    </g>
  </Drawing>
);

const PropCell = ({ row }: { row: Row }) => (
  <PropValue $dim={row.kind === "dim"}>
    {row.kind === "swatch" && <Swatch $s={11} />}
    {row.kind === "type" && <Stroke $w={45} />}
    {row.kind === "weight" && <Stroke $w={40} />}
    {row.value}
  </PropValue>
);

export default function App() {
  return (
    <Shell>
      <GlobalStyle />
      <Header>
        <Logo>
          <Icon w={52} h={53}>
            <g stroke="#2b94f2" strokeWidth="3" strokeLinecap="round" strokeLinejoin="round">
              <path d="M20 16L14 32M22.500 28.500l4.500-1 2.500 10 3.500-8 2 4.500 4.500-4" />
            </g>
            <circle cx="20" cy="15.500" r="4.500" fill="#1e90ff" stroke="none" />
            <circle cx="13.500" cy="33.500" r="4.500" fill="#35c2f4" stroke="none" />
          </Icon>
        </Logo>
        <HeaderRows>
          <TitleRow>
            <QuickBar>
              {quickIcons.map((q) => (
                <QuickButton key={q.name} $narrow={q.narrow} aria-label={q.name}>{q.icon}</QuickButton>
              ))}
            </QuickBar>
            <SelectFrame $w={150} $h={23}>
              <Select aria-label="Рабочее пространство"><option>2d рисование &amp; аннот</option></Select>
              <Above><Caret $size={4} /></Above>
            </SelectFrame>
            <Grip />
            <Title>ZWCAD 2020 Оценочная версия (осталось 30 дней) - [Чертеж1.dwg]</Title>
            <WindowButtons>
              <WindowButton aria-label="Свернуть"><Icon s={14}><path d="M1 12h12" strokeWidth="2" /></Icon></WindowButton>
              <WindowButton aria-label="Развернуть"><Icon w={15} h={12}><rect x="3" y="1.500" width="11" height="8" /><path d="M3 1.500h11" strokeWidth="2" /><path d="M1 3v8.500h11" /></Icon></WindowButton>
              <WindowButton aria-label="Закрыть"><CloseIcon s={13} w={1.2} /></WindowButton>
            </WindowButtons>
          </TitleRow>
          <TabRow>
            {ribbonTabs.map((t, i) => <RibbonTab key={t} $active={i === 0}>{t}</RibbonTab>)}
            <RibbonTab aria-label="Свернуть ленту">
              <Icon w={14} h={11}><rect width="14" height="11" rx="1" fill="#fff" stroke="none" /><path d="M7 3l3 4H4z" fill="#31373f" stroke="none" /></Icon>
            </RibbonTab>
          </TabRow>
        </HeaderRows>
      </Header>

      <Ribbon>
        <Group $w={319}>
          <GroupBody>
            <Big icon={big.line} w={66} lines={["Отрезок"]} caret="below" />
            <Big icon={big.poly} w={64} lines={["Полилиния"]} caret="below" />
            <Big icon={big.circle} w={50} lines={["Круг"]} caret="below" />
            <Big icon={big.arc} w={40} lines={["Дуга"]} caret="below" />
            <Tools cols="30px 8px 32px 20px" items={drawTools} />
          </GroupBody>
          <GroupTitle>Черчение</GroupTitle>
        </Group>
        <Group $w={439}>
          <GroupBody>
            <Big icon={big.move} w={80} lines={["Перенести"]} caret="below" />
            <Big icon={big.copy} w={64} lines={["Копировать"]} caret="below" />
            <Big icon={big.stretch} w={74} lines={["Растянуть"]} caret="below" />
            <Big icon={big.fillet} w={70} lines={["Сопряжение"]} caret="below" />
            <Tools cols="36px 4px 36px 16px" items={editTools} />
            <Big icon={big.erase} w={58} lines={["Стереть"]} />
          </GroupBody>
          <GroupTitle>Изменить</GroupTitle>
        </Group>
        <Group $w={154}>
          <GroupBody>
            <Big icon={big.mtext} w={112} lines={["Многострочный", "текст"]} caret="inline" />
            <Tools cols="20px 18px" items={noteTools} />
          </GroupBody>
          <GroupTitle>Аннотации</GroupTitle>
        </Group>
        <Group $w={306}>
          <GroupBody>
            <Big icon={big.layers} w={66} lines={["Свойства", "слоя"]} />
            <LayerColumn>
              <LayerGrid>
                {layerIcons.map((icon, i) => (
                  <ToolButton key={i} aria-label={`Слой, команда ${i + 1}`}><Icon s={18}>{icon}</Icon></ToolButton>
                ))}
              </LayerGrid>
              <LayerSelectRow>
                <SelectFrame $w={207} $h={22}>
                  <Select aria-label="Текущий слой" />
                  <LayerFace>
                    <Icon w={16} h={16}><path d="M8 1a5 5 0 0 1 3 9v2H5v-2a5 5 0 0 1 3-9zM6 13h4v2H6z" fill="#f4c63c" stroke="none" /></Icon>
                    <Icon s={14}><circle cx="7" cy="7" r="3" fill="#f4c63c" stroke="none" /><circle cx="7" cy="7" r="6" stroke="#f4c63c" strokeWidth="2" strokeDasharray="2 2.700" /></Icon>
                    <Icon s={14}><path d="M1 8V5a3 3 0 0 1 6 0v2" stroke={c.blue} strokeWidth="1.800" /><rect x="5" y="7" width="9" height="7" fill="#5cb4f2" stroke="none" /><path d="M9 10v2" stroke="#31373f" /></Icon>
                    <Swatch $s={14} />
                    <LayerName>0</LayerName>
                    <Caret $size={4} />
                  </LayerFace>
                </SelectFrame>
              </LayerSelectRow>
            </LayerColumn>
          </GroupBody>
          <GroupTitle>Слой</GroupTitle>
        </Group>
        <Group $w={92}>
          <GroupBody>
            <Big icon={big.insert} w={64} lines={["Вставить"]} />
            <Tools cols="18px" items={blockTools} />
          </GroupBody>
          <GroupTitle>Блок</GroupTitle>
        </Group>
        <Big icon={big.palette} w={58} lines={["Свойства"]} caret="below" tall />
        <Big icon={big.paste} w={57} lines={["Буфер", "обмена"]} caret="inline" tall />
      </Ribbon>

      <Work>
        <DocColumn>
          <DocTabs>
            <DocList aria-label="Список чертежей"><Caret $size={4} /></DocList>
            <DocTab>
              <Icon w={16} h={16}><path d="M3 0h8l3 3v13H3z" fill="#fff" stroke="none" /><rect x="0" y="5" width="16" height="8" fill="#1668b8" stroke="none" /><text x="8" y="12" fontSize="7" fontWeight="bold" textAnchor="middle" fill="#fff" stroke="none" fontFamily="Liberation Sans, sans-serif">DWG</text></Icon>
              <span>Чертеж1.dwg*</span>
              <CloseIcon s={11} w={2.2} />
            </DocTab>
            <NewTab aria-label="Новый чертеж"><NewDocIcon /></NewTab>
          </DocTabs>
          <Canvas>
            <CanvasDrawing />
            <MdiButtons>
              <MdiButton aria-label="Свернуть"><Icon s={10}><path d="M0 7.500h10" strokeWidth="3" /></Icon></MdiButton>
              <MdiButton aria-label="Восстановить"><Icon s={10}><rect x="1" y="3" width="6" height="6" strokeWidth="2" /><path d="M3 .7h6.300V7" /></Icon></MdiButton>
              <MdiButton aria-label="Закрыть"><CloseIcon s={9} w={2.4} /></MdiButton>
            </MdiButtons>
            <Tip $x={135} $y={95} $w={135}>Полярная: 605.4819 &lt; 180°</Tip>
            <Tip $x={146} $y={348} $w={65}>180°</Tip>
            <DynamicField><input aria-label="Длина" defaultValue="605.4819" /></DynamicField>
          </Canvas>
          <SheetTabs>
            <SheetNav aria-label="Меню листов"><Caret $size={4} $up /></SheetNav>
            <SheetNav aria-label="Первый"><Icon s={10}><path d="M1.500 1v8" stroke="#8d96a1" /><path d="M9 1v8L3 5z" fill="#8d96a1" stroke="none" /></Icon></SheetNav>
            <SheetNav aria-label="Назад"><Icon s={10}><path d="M8 1v8L2 5z" fill="#8d96a1" stroke="none" /></Icon></SheetNav>
            <SheetNav aria-label="Вперед"><Icon s={10}><path d="M2 1v8l6-4z" fill="#8d96a1" stroke="none" /></Icon></SheetNav>
            <SheetNav aria-label="Последний"><Icon s={10}><path d="M8.500 1v8" stroke="#8d96a1" /><path d="M1 1v8l6-4z" fill="#8d96a1" stroke="none" /></Icon></SheetNav>
            <SheetTab $w={59} $active>Модель</SheetTab>
            <SheetTab $w={53}>Лист1</SheetTab>
            <SheetTab $w={53}>Лист2</SheetTab>
            <SheetTab $w={29}>+</SheetTab>
          </SheetTabs>
          <Command>
            <CommandStrip aria-label="Закрыть командную строку"><CloseIcon s={10} w={1.4} color="#6c747f" /></CommandStrip>
            <CommandText>
              <Log>
                <LogLines>
                  <div>{prompt}</div>
                  <div>{prompt}</div>
                  <div>{prompt}</div>
                </LogLines>
                <ScrollTrack $w={15}>
                  <ScrollArrow aria-label="Вверх"><ChevronIcon /></ScrollArrow>
                  <ScrollThumb $h={7} $push />
                  <ScrollArrow aria-label="Вниз"><ChevronIcon down /></ScrollArrow>
                </ScrollTrack>
              </Log>
              <CommandInput aria-label="Командная строка" defaultValue={prompt} />
            </CommandText>
          </Command>
        </DocColumn>

        <Dock $w={276}>
          <DockHead $pad={18}>Быстр Кальк<button aria-label="Закрыть калькулятор"><CloseIcon /></button></DockHead>
          <CalcBar>
            {calcTools.map((t) => <CalcTool key={t.name} aria-label={t.name}>{t.icon}</CalcTool>)}
          </CalcBar>
          <CalcMain>
            <CalcScroll>
              <History />
              <CalcInput aria-label="Выражение" />
              <CalcHeading $top={10}>Обычный калькулятор&lt;&lt;</CalcHeading>
              <Keys>{basicKeys.map((k) => <Key key={k}>{k}</Key>)}</Keys>
              <CalcHeading $top={17}>Научные&lt;&lt;</CalcHeading>
              <Keys>{scienceKeys.map((k) => <Key key={k}>{k}</Key>)}</Keys>
              <CalcHeading $top={17}>Переменные&lt;&lt;</CalcHeading>
              <VarBar>
                <VarButton $on aria-label="Новая переменная"><Glyph>x</Glyph><Icon s={18}><path d="M13.500 3v6M10.500 6h6" stroke={c.gold} strokeWidth="1.200" /></Icon></VarButton>
                <VarButton aria-label="Изменить переменную"><Glyph $dim>x</Glyph><Icon s={18}><path d="M9 15l7-8" stroke="#d5dae0" strokeWidth="1.800" /></Icon></VarButton>
                <VarButton aria-label="Удалить переменную"><Glyph $dim>x</Glyph><Icon s={18}><path d="M11 10l5 5M16 10l-5 5" stroke="#b4bac2" strokeWidth="1.200" /></Icon></VarButton>
                <VarButton aria-label="В поле ввода"><Icon w={11} h={13}><rect width="11" height="13" fill="#fff" stroke="none" /><path d="M1.500 3h8" stroke="#39414c" /><path d="M2 6.500h7M2 8.500h7M2 10.500h7" stroke="#39414c" strokeDasharray="1 2" /></Icon></VarButton>
              </VarBar>
              <Tree>
                <TreeList>
                  <TreeItem $root>
                    <Icon s={9}><rect width="9" height="9" fill="#fff" stroke="none" /><path d="M2 4.500h5" stroke="#39414c" /></Icon>
                    <Icon w={17} h={14}><path d="M1 1h5l2 2h7v9H1z" fill="#f3bc62" stroke="none" /><path d="M9 5l5 7M15 5l-7 7" stroke="#8e97a2" /></Icon>
                    Пример
                  </TreeItem>
                  {variables.map((v, i) => (
                    <TreeItem key={v}><Glyph $plain={i === 0}>{i === 0 ? "k" : "x"}</Glyph>{v}</TreeItem>
                  ))}
                </TreeList>
                <ScrollTrack $w={16}>
                  <ScrollArrow aria-label="Вверх"><ChevronIcon /></ScrollArrow>
                  <ScrollThumb $h={109} />
                  <ScrollArrow $end aria-label="Вниз"><ChevronIcon down /></ScrollArrow>
                </ScrollTrack>
              </Tree>
              <Details>Подробности</Details>
              <DetailBox />
            </CalcScroll>
            <ScrollTrack $w={13}>
              <ScrollArrow aria-label="Вверх"><ChevronIcon /></ScrollArrow>
              <ScrollThumb $h={75} />
              <ScrollArrow $end aria-label="Вниз"><ChevronIcon down /></ScrollArrow>
            </ScrollTrack>
          </CalcMain>
        </Dock>

        <Dock $w={221}>
          <DockHead $pad={11}>Свойства<button aria-label="Закрыть свойства"><CloseIcon /></button></DockHead>
          <PropBar>
            <PropFrame $w={130} $h={24}>
              <PropSelect aria-label="Выбранный объект"><option>Ничего не выбра...</option></PropSelect>
              <Above><Caret $size={5} /></Above>
            </PropFrame>
            <PropButton aria-label="Добавлять к выбору"><Icon s={16}><path d="M4 9.500H1.500V1.500h8V4" /><rect x="4.500" y="4.500" width="10" height="10" /><path d="M9.500 7v5M7 9.500h5" stroke={c.gold} strokeWidth="1" /></Icon></PropButton>
            <PropButton aria-label="Выбрать объекты"><Icon s={16}><circle cx="6" cy="9" r="5" stroke={c.pale} /><rect x="6" y="1" width="9" height="9" fill="#5cb4f2" stroke="none" /><path d="M10 8l5 5h-3l1 2-2 1-1-3z" fill="#fff" stroke="none" /></Icon></PropButton>
            <PropButton aria-label="Быстрый выбор"><Icon s={16}><path d="M1.500 2l7 7h-3l2 4-1.500 1-2-4-2.500 2z" strokeWidth="1.200" /><path d="M13 2l-5 6h3l-2 6 6-7h-3l3-5z" fill={c.gold} stroke="none" /></Icon></PropButton>
          </PropBar>
          {sections.map((s, i) => (
            <PropSection key={s.title}>
              <PropHeading>{s.title}<Caret $size={5} /></PropHeading>
              <PropTable>
                <tbody>
                  {s.rows.map((r, j) => (
                    <tr key={`${i}-${j}`}>
                      <th scope="row">{r.label}</th>
                      <td><PropCell row={r} /></td>
                    </tr>
                  ))}
                </tbody>
              </PropTable>
            </PropSection>
          ))}
        </Dock>
      </Work>

      <Status>
        <Coords>198.9050, 569.0415, 0.0000</Coords>
        <StatusTools>
          {statusTools.map((t) => <StatusButton key={t.name} $on={t.on} aria-label={t.name}>{t.icon}</StatusButton>)}
        </StatusTools>
        <StatusRight>
          <ScaleButton><ScaleIcon />1:1<Caret $size={4} /></ScaleButton>
          <StatusButton aria-label="Видимость аннотаций"><ScaleIcon extra={<circle cx="14" cy="14" r="2.500" fill="#f4c63c" stroke="none" />} /></StatusButton>
          <StatusButton aria-label="Автомасштаб"><ScaleIcon extra={<path d="M6 1L2 5h3L3 8" stroke={c.pale} strokeWidth="1.200" />} /></StatusButton>
          <StatusButton aria-label="Настройки"><Icon s={16}><circle cx="8" cy="8" r="4" stroke="#7cc0ee" strokeWidth="2.500" /><circle cx="8" cy="8" r="6.300" stroke="#7cc0ee" strokeWidth="2" strokeDasharray="2.500 2.450" /></Icon></StatusButton>
          <StatusButton aria-label="Во весь экран"><Icon s={16}><path d="M1.500 5V1.500H5M11 1.500h3.500V5M14.500 11v3.500H11M5 14.500H1.500V11M2 2l4 4M14 2l-4 4M14 14l-4-4M2 14l4-4" strokeWidth="1.200" /></Icon></StatusButton>
        </StatusRight>
      </Status>
    </Shell>
  );
}
